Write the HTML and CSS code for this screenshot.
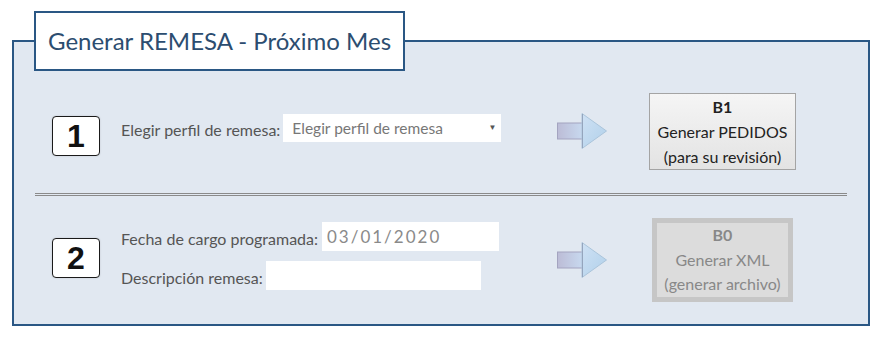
FILE: index.html
```html
<!DOCTYPE html>
<html lang="es">
<head>
    <meta charset="UTF-8">
    <title>Generar REMESA - Próximo Mes</title>
    <link rel="stylesheet" href="styles.css">
</head>
<body>
    <fieldset class="remesa">
        <legend>Generar REMESA - Próximo Mes</legend>

        <div class="step step-1">
            <div class="step-num">1</div>
            <div class="fields">
                <label class="field">
                    <span>Elegir perfil de remesa:</span>
                    <span class="select-wrap">
                        <select class="select">
                            <option>Elegir perfil de remesa</option>
                        </select>
                        <span class="caret">&#9660;</span>
                    </span>
                </label>
            </div>
            <svg class="arrow" width="50" height="36" viewBox="0 0 50 36">
                <defs>
                    <linearGradient id="shaft1" x1="0" x2="1" y1="0" y2="0">
                        <stop offset="0" stop-color="#bcbcd6"/>
                        <stop offset="1" stop-color="#c8daf0"/>
                    </linearGradient>
                    <linearGradient id="head1" x1="0" x2="1" y1="0" y2="1">
                        <stop offset="0" stop-color="#cfe1f4"/>
                        <stop offset="1" stop-color="#b0d0ea"/>
                    </linearGradient>
                </defs>
                <rect x="0.5" y="10" width="26" height="16" fill="url(#shaft1)" stroke="#a4a4c0" stroke-width="1"/>
                <path d="M25 0.5 L49.5 18 L25 35.5 Z" fill="url(#head1)" stroke="#aac4da" stroke-width="1"/>
                <line x1="25.5" y1="1" x2="25.5" y2="35" stroke="#95a5bd" stroke-width="1"/>
            </svg>
            <div class="action">
                <button class="btn-step">
                    <strong>B1</strong>
                    <span>Generar PEDIDOS</span>
                    <span>(para su revisión)</span>
                </button>
            </div>
        </div>

        <hr class="sep">

        <div class="step step-2">
            <div class="step-num">2</div>
            <div class="fields">
                <label class="field">
                    <span>Fecha de cargo programada:</span>
                    <input type="text" class="input input-date" value="03/01/2020">
                </label>
                <label class="field">
                    <span>Descripción remesa:</span>
                    <input type="text" class="input input-desc">
                </label>
            </div>
            <svg class="arrow" width="50" height="36" viewBox="0 0 50 36">
                <defs>
                    <linearGradient id="shaft2" x1="0" x2="1" y1="0" y2="0">
                        <stop offset="0" stop-color="#bcbcd6"/>
                        <stop offset="1" stop-color="#c8daf0"/>
                    </linearGradient>
                    <linearGradient id="head2" x1="0" x2="1" y1="0" y2="1">
                        <stop offset="0" stop-color="#cfe1f4"/>
                        <stop offset="1" stop-color="#b0d0ea"/>
                    </linearGradient>
                </defs>
                <rect x="0.5" y="10" width="26" height="16" fill="url(#shaft2)" stroke="#a4a4c0" stroke-width="1"/>
                <path d="M25 0.5 L49.5 18 L25 35.5 Z" fill="url(#head2)" stroke="#aac4da" stroke-width="1"/>
                <line x1="25.5" y1="1" x2="25.5" y2="35" stroke="#95a5bd" stroke-width="1"/>
            </svg>
            <div class="action">
                <button class="btn-step btn-disabled" disabled>
                    <strong>B0</strong>
                    <span>Generar XML</span>
                    <span>(generar archivo)</span>
                </button>
            </div>
        </div>
    </fieldset>
</body>
</html>
```

FILE: styles.css
```css
body { margin: 0; background-color: #fff; font-family: Lato, "Open Sans", sans-serif; color: #555; }
.remesa { box-sizing: border-box; width: 858px; margin: 11px 0 0 12px; padding: 22px 0 22px 0; border: 2px solid #2a5784; background-color: #e1e8f1; min-width: 0; }
.remesa legend { margin-left: 20px; padding: 0 12px; height: 60px; box-sizing: border-box; line-height: 56px; border: 2px solid #2a5784; background-color: #fff; color: #2c4d70; font-size: 24px; }

.step { display: grid; grid-template-columns: 48px 457px 50px 1fr; align-items: center; padding: 0 30px 0 38px; }
.step-1 { height: 77px; }
.step-2 { height: 84px; }

.step-num { box-sizing: border-box; width: 48px; height: 40px; border: 1.5px solid #1a1a1a; border-radius: 4px; background-color: #fff; box-shadow: 0 0 2px rgba(0,0,0,0.15); font-family: "Liberation Sans", Arial, sans-serif; font-weight: bold; font-size: 32px; line-height: 1; color: #111; display: flex; align-items: center; justify-content: center; }
.step-1 .step-num { margin-top: 9px; }
.step-2 .step-num { margin-top: -4px; }

.fields { padding-left: 21px; display: flex; flex-direction: column; gap: 10px; }
.step-1 .fields { margin-top: -8px; }
.step-2 .fields { margin-top: -8px; }
.field { display: flex; align-items: center; font-size: 16px; color: #555; }
.field > span:first-child { margin-right: 3px; padding-top: 3px; }

.select-wrap { position: relative; display: inline-block; }
.select { appearance: none; -webkit-appearance: none; width: 218px; height: 28px; border: none; border-radius: 0; background-color: #fff; padding: 0 0 0 9px; font-family: Lato, sans-serif; font-size: 15.5px; color: #777; outline: none; }
.caret { position: absolute; right: 5px; top: 8px; font-size: 8px; color: #555; pointer-events: none; }

.input { box-sizing: border-box; height: 29px; border: none; background-color: #fff; padding: 0 5px; font-family: Lato, sans-serif; outline: none; }
.input-date { width: 177px; font-size: 17px; letter-spacing: 2px; color: #8a8a8a; margin-left: 1px; }
.input-desc { width: 215px; }

.arrow { display: block; }
.step-1 .arrow { margin-top: -2px; }
.step-2 .arrow { margin-top: 0; }

.action { display: flex; justify-content: center; }
.btn-step { box-sizing: border-box; display: flex; flex-direction: column; align-items: center; padding: 0; border: 1px solid #a4a4a4; background: linear-gradient(#f5f5f5, #e3e3e3); font-family: Lato, sans-serif; font-size: 16px; line-height: 25px; color: #222; width: 147px; height: 77px; cursor: pointer; }
.btn-step strong { font-weight: bold; }
.btn-disabled { width: 141px; height: 84px; border: 5px solid #c6c6c6; background: #dcdcdc; color: #888; line-height: 24.5px; cursor: default; }

.sep { margin: 23px 21px 22px 21px; border: none; border-top: 3px double #8a8a8a; height: 0; }
```
